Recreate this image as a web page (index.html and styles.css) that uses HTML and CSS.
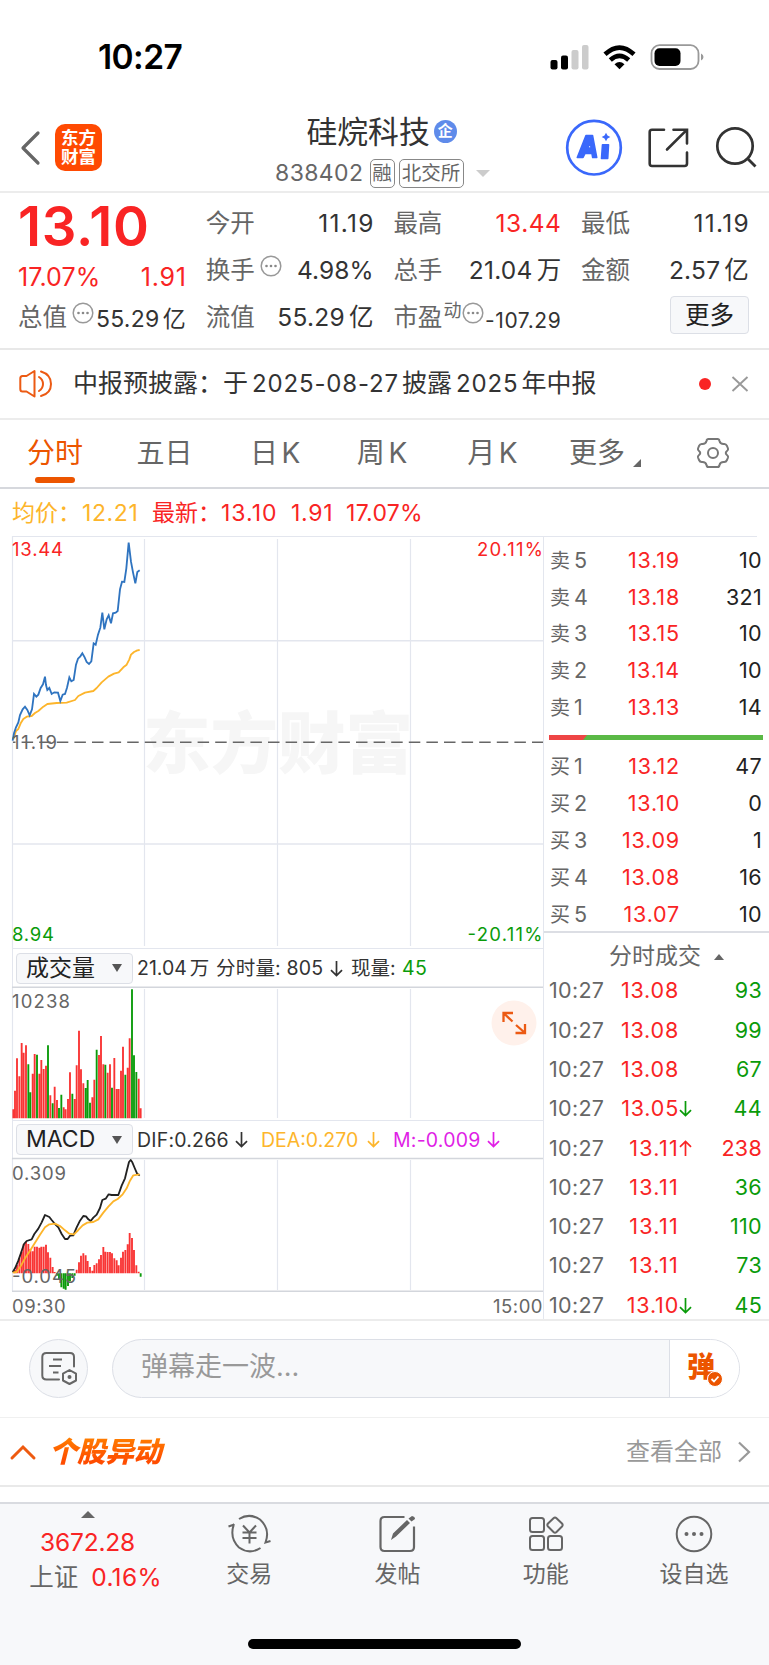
FILE: index.html
```html
<!DOCTYPE html>
<html lang="zh-CN">
<head>
<meta charset="utf-8">
<title>硅烷科技 838402</title>
<link rel="stylesheet" href="styles.css">
</head>
<body>
<div class="status">
  <div class="clock">10:27</div>
  <svg class="status-icons" width="156" height="30" viewBox="550 42 156 30">
    <rect x="551.5" y="60" width="7" height="9.5" rx="2"/>
    <rect x="562" y="55.5" width="7" height="14" rx="2"/>
    <rect x="572.5" y="50" width="7" height="19.500" rx="2" fill="#ccc"/>
    <rect x="583" y="45" width="6.500" height="24.500" rx="2" fill="#ccc"/>
    <g fill="none" stroke="#000" stroke-width="4.600">
      <path d="M606 54.300Q620.500 40.800 635 54.300"/>
      <path d="M611.300 60Q620.500 51.700 629.700 60"/>
    </g>
    <path d="M615.500 64.200Q620.500 60 625.500 64.200L620.500 69.300Z"/>
    <rect x="652.500" y="45.200" width="47" height="23.800" rx="8" fill="none" stroke="#999" stroke-width="1.800"/>
    <rect x="655.500" y="48.200" width="26" height="17.800" rx="5"/>
    <path d="M702 53.500Q704.500 54.500 704.500 57T702 60.500Z" fill="#999"/>
  </svg>
</div>

<header class="header">
  <svg class="back" width="20" height="34" viewBox="0 0 20 34"><path d="M18 2L3 17L18 32" fill="none" stroke="#666" stroke-width="3.200" stroke-linecap="round" stroke-linejoin="round"/></svg>
  <div class="brand"><span>东方</span><span>财富</span></div>
  <div class="name-block">
    <div class="name">硅烷科技<span class="corp">企</span></div>
    <div class="code-row"><span class="code">838402</span><span class="tag">融</span><span class="tag tag-wide">北交所</span><i class="tri-down"></i></div>
  </div>
  <svg class="tools" width="196" height="58" viewBox="565 119 196 58" fill="none">
    <circle cx="594" cy="147.700" r="26.800" stroke="#3a68fb" stroke-width="2.700"/>
    <path d="M577.300 157.500L586 135.500H592.500L596.700 157.500H592.700L592 153.500H585L583 157.500ZM587.700 148H591.200L590.300 143Z" fill="#3a68fb" fill-rule="evenodd" stroke="#3a68fb" stroke-width="1.600" stroke-linejoin="round"/>
    <path d="M602.500 144.800H608.500L607.700 158.500H601.500Z" fill="#3a68fb" stroke="#3a68fb" stroke-width="1.600" stroke-linejoin="round"/>
    <path d="M606 132.700L607.500 135.500L610.300 137L607.500 138.500L606 141.300L604.500 138.500L601.700 137L604.500 135.500Z" fill="#3a68fb"/>
    <path d="M664 129.700H652Q649.700 129.700 649.700 132V163.500Q649.700 166 652 166H684.500Q687 166 687 163.500V152.500M673.500 129.700H687V143.500M686.500 130.200L667 149.500" stroke="#333" stroke-width="2.600" stroke-linecap="round"/>
    <circle cx="735" cy="146" r="17.700" stroke="#333" stroke-width="2.700"/>
    <path d="M747.500 158.500L755.500 166.500" stroke="#333" stroke-width="2.900"/>
  </svg>
</header>

<section class="quote">
  <div class="q-col">
    <div class="big">13.10</div>
    <div class="q-row q-red q-change"><span>17.07%</span><span>1.91</span></div>
    <div class="q-row q-last"><span class="lb">总值</span><svg class="dots" viewBox="0 0 22 22"><use href="#more-dots"/></svg><span class="val val-s">55.29<b>亿</b></span></div>
  </div>
  <div class="q-col">
    <div class="q-row"><span class="lb">今开</span><span class="val w1">11.19</span></div>
    <div class="q-row"><span class="lb">换手</span><svg class="dots" viewBox="0 0 22 22"><use href="#more-dots"/></svg><span class="val">4.98%</span></div>
    <div class="q-row"><span class="lb">流值</span><span class="val w3">55.29<b>亿</b></span></div>
  </div>
  <div class="q-col">
    <div class="q-row"><span class="lb">最高</span><span class="val q-red w2">13.44</span></div>
    <div class="q-row"><span class="lb">总手</span><span class="val w3">21.04<b>万</b></span></div>
    <div class="q-row"><span class="lb">市盈</span><span class="sup">动</span><svg class="dots dots-tight" viewBox="0 0 22 22"><use href="#more-dots"/></svg><span class="val val-xs">-107.29</span></div>
  </div>
  <div class="q-col">
    <div class="q-row"><span class="lb">最低</span><span class="val w1">11.19</span></div>
    <div class="q-row"><span class="lb">金额</span><span class="val w3">2.57<b>亿</b></span></div>
    <div class="q-row"><button class="more-btn">更多</button></div>
  </div>
</section>

<section class="notice">
  <svg width="34" height="30" viewBox="19 369 34 30" fill="none" stroke="#ec5a13" stroke-width="2" stroke-linejoin="round">
    <path d="M34.500 371V396.500L26.500 391.500H22.500Q20.300 391.500 20.300 389V378.500Q20.300 376 22.500 376H26.500Z"/>
    <path d="M39 377Q43 379.500 43 384T39 391M41 371.500Q51 374.500 51 384T41 396" stroke-linecap="round"/>
  </svg>
  <p class="notice-text">中报预披露：<span>于</span><span class="num">2025-08-27</span>披露<span class="num">2025</span>年中报</p>
  <i class="dot"></i>
  <svg width="18" height="18" viewBox="0 0 18 18"><path d="M1.500 2L16.500 16M16.500 2L1.500 16" stroke="#999" stroke-width="1.900"/></svg>
</section>

<nav class="tabs">
  <span class="tab active">分时</span>
  <span class="tab">五日</span>
  <span class="tab">日<em>K</em></span>
  <span class="tab">周<em>K</em></span>
  <span class="tab">月<em>K</em></span>
  <span class="tab">更多<i class="corner"></i></span>
  <svg class="gear" width="34" height="32" viewBox="-17 -16 34 32" fill="none" stroke="#777" stroke-width="2" stroke-linejoin="round">
    <path d="M-4.500-14H4.500Q6.200-14 6.500-12Q7.300-8.800 11-9Q13-9.200 14-7L15-4.500Q15.500-3 14-2Q11.500 0 14 2Q15.500 3 15 4.500L14 7Q13 9.200 11 9Q7.300 8.800 6.500 12Q6.200 14 4.500 14H-4.500Q-6.200 14-6.500 12Q-7.300 8.800-11 9Q-13 9.200-14 7L-15 4.500Q-15.500 3-14 2Q-11.500 0-14-2Q-15.500-3-15-4.500L-14-7Q-13-9.200-11-9Q-7.300-8.800-6.500-12Q-6.200-14-4.500-14Z"/>
    <circle r="5"/>
  </svg>
</nav>

<div class="legend">
  <span class="l-avg">均价：</span><span class="l-avg l-n1">12.21</span><span class="l-new">最新：</span><span class="l-n2">13.10</span><span class="l-n3">1.91</span><span class="l-n4">17.07%</span>
</div>

<main class="detail">
  <div class="charts">
    <svg class="chart" width="543" height="412" viewBox="0 536 543 412">
      <g class="grid">
        <path d="M12.500 536V948M144.500 539V946M277.500 539V946M410.500 539V946"/>
        <path d="M12 640.700H543M12 844H543" stroke-width="1.600"/>
        <path d="M12 536.500H543"/>
      </g>
      <text class="wm" x="143" y="768" textLength="270">东方财富</text>
      <g transform="translate(0 530) scale(.33333)">
        <path class="avg" d="M40 628L48 603L55 597L62 580L70 567L80 560L95 558L105 549L115 543L130 530L142 522L170 519L200 518L225 510L235 498L255 488L280 483L290 474L305 457L325 440L342 431L356 427L370 412L380 404L388 388L393 374L402 366L412 361L419 360"/>
        <path class="price" d="M38 632L42 610L48 592L55 577L60 555L68 538L75 530L82 540L89 556L96 538L102 492L109 500L115 494L122 474L129 463L135 440L138 465L142 480L148 474L155 492L163 487L174 488L181 513L188 494L195 492L201 473L208 442L214 454L221 450L228 404L234 386L241 379L247 370L254 382L260 396L267 402L274 394L281 340L287 344L294 314L301 293L307 248L313 298L320 268L326 256L333 280L339 250L347 248L353 243L360 178L366 155L373 156L379 115L386 38L393 95L399 127L406 160L412 126L419 121"/>
      </g>
      <path d="M13 742.300H543" stroke="#666" stroke-width="1.400" stroke-dasharray="11.500 6.100" stroke-dashoffset="9"/>
      <text class="t red" x="12" y="555.500" textLength="51">13.44</text>
      <text class="t red" x="477" y="555.500" textLength="66">20.11%</text>
      <text class="t gray" x="12" y="748.500" textLength="45">11.19</text>
      <text class="t green" x="12" y="941" textLength="42">8.94</text>
      <text class="t green" x="467.500" y="941" textLength="75">-20.11%</text>
    </svg>
    <div class="ind">
      <span class="sel">成交量<i></i></span>
      <span class="ind-v iv1">21.04<b>万</b></span><span class="ind-v iv2">分时量: 805</span><svg class="ar" viewBox="0 0 12 16"><use href="#arrow-down"/></svg><span class="ind-v iv3">现量:</span><span class="ind-v iv4 green-c">45</span>
    </div>
    <div class="vol-wrap">
      <svg class="chart" width="543" height="133" viewBox="0 987 543 133">
        <g class="grid"><path d="M12.500 987V1120M144.500 989V1118M277.500 989V1118M410.500 989V1118"/><path d="M12 987.300H543" stroke="#d3d6dc" stroke-width="1.600"/></g>
        <text class="t gray" x="12" y="1008" textLength="58">10238</text>
        <g transform="translate(0 940) scale(.33333)" fill="none" stroke-width="5.600">
          <path stroke="#f93434" d="M40 535V508M45 535V452M51 535V355M58 535V409M65 535V309M71 535V338M78 535V316M98 535V401M104 535V342M118 535V401M124 535V360M131 535V387M138 535V377M151 535V466M164 535V440M171 535V480M191 535V502M197 535V508M204 535V477M210 535V397M224 535V477M230 535V376M237 535V272M243 535V388M250 535V430M277 535V472M283 535V419M297 535V345M303 535V288M310 535V373M323 535V398M330 535V373M343 535V354M350 535V447M356 535V447M363 535V392M369 535V320M383 535V383M389 535V295M416 535V416M422 535V505"/>
          <path stroke="#0a9b0a" d="M85 535V373M91 535V457M111 535V344M144 535V316M158 535V490M177 535V504M184 535V464M217 535V461M257 535V444M263 535V420M270 535V488M290 535V329M316 535V374M336 535V443M376 535V404M396 535V148M402 535V346M409 535V396"/>
        </g>
      </svg>
      <svg class="expand" width="46" height="46" viewBox="-23 -23 46 46" fill="none" stroke="#ec5a13" stroke-width="2.300">
        <circle r="22.500" fill="#fff1eb" stroke="none"/>
        <path d="M-1-10H-10.500V-1M-10-9.500L-1.500-1.500M11 1V10H1.500M10.500 9.500L2 2"/>
      </svg>
    </div>
    <div class="ind ind-2">
      <span class="sel sel-en">MACD<i></i></span>
      <span class="ind-v iv1 m1">DIF:0.266</span><svg class="ar" viewBox="0 0 12 16"><use href="#arrow-down"/></svg><span class="ind-v m2">DEA:0.270</span><svg class="ar c-y" viewBox="0 0 12 16"><use href="#arrow-down"/></svg><span class="ind-v m3">M:-0.009</span><svg class="ar c-m" viewBox="0 0 12 16"><use href="#arrow-down"/></svg>
    </div>
    <svg class="chart" width="543" height="134" viewBox="0 1158 543 134">
      <g class="grid"><path d="M12.500 1158V1291M144.500 1160V1290M277.500 1160V1290M410.500 1160V1290"/><path d="M12 1158.500H543M12 1291.300H543" stroke="#d3d6dc" stroke-width="1.400"/></g>
      <g transform="translate(0 940) scale(.33333)" fill="none">
        <path stroke="#f93434" stroke-width="5.600" d="M45 1000V990M51 1000V975M58 1000V955M65 1000V935M71 1000V912M78 1000V905M85 1000V912M91 1000V928M98 1000V934M104 1000V920M111 1000V920M118 1000V923M124 1000V920M131 1000V920M138 1000V914M144 1000V937M151 1000V953M158 1000V981M164 1000V996M230 1000V989M237 1000V967M243 1000V947M250 1000V940M257 1000V946M263 1000V963M270 1000V981M277 1000V992M283 1000V975M290 1000V970M297 1000V958M303 1000V945M310 1000V921M316 1000V935M323 1000V936M330 1000V936M336 1000V940M343 1000V955M350 1000V961M356 1000V976M363 1000V953M369 1000V935M376 1000V930M383 1000V913M389 1000V879M396 1000V894M402 1000V930M409 1000V976M416 1000V995"/>
        <path stroke="#0a9b0a" stroke-width="5.600" d="M171 1000V1007M177 1000V1018M184 1000V1042M191 1000V1046M197 1000V1049M204 1000V1038M210 1000V1024M217 1000V1014M224 1000V1007M422 1000V1010"/>
        <path class="dif" d="M38 997L45 985L55 962L65 933L72 912L80 903L95 898L103 882L115 866L125 847L135 825L148 831L155 840L165 852L175 862L185 882L195 897L203 897L210 887L220 886L230 862L240 842L250 828L258 829L265 838L272 843L280 833L290 824L300 804L307 780L317 776L326 763L335 765L355 765L365 737L375 715L381 690L387 666L392 660L397 667L404 684L411 700L419 707"/>
        <path class="avg" d="M38 998L50 996L60 982L75 955L90 932L105 908L120 884L135 862L148 853L165 851L180 858L195 871L208 881L222 883L235 870L248 856L262 848L280 846L295 838L310 818L325 800L340 784L353 777L368 763L380 745L390 722L400 706L419 703"/>
      </g>
      <text class="t gray" x="12" y="1179.500" textLength="54">0.309</text>
      <text class="t gray" x="12" y="1283" textLength="64">-0.045</text>
    </svg>
    <div class="times"><span>09:30</span><span>15:00</span></div>
  </div>

  <div class="book">
    <div class="levels">
      <div class="lv"><span>卖<em>5</em></span><span>13.19</span><span>10</span></div>
      <div class="lv"><span>卖<em>4</em></span><span>13.18</span><span>321</span></div>
      <div class="lv"><span>卖<em>3</em></span><span>13.15</span><span>10</span></div>
      <div class="lv"><span>卖<em>2</em></span><span>13.14</span><span>10</span></div>
      <div class="lv"><span>卖<em>1</em></span><span>13.13</span><span>14</span></div>
    </div>
    <svg class="ratio" width="214" height="5" viewBox="0 0 214 5"><path fill="#5ab946" d="M0 0H214V5H0Z"/><path fill="#ee4545" d="M0 0H38L34 5H0Z"/></svg>
    <div class="levels buys">
      <div class="lv"><span>买<em>1</em></span><span>13.12</span><span>47</span></div>
      <div class="lv"><span>买<em>2</em></span><span>13.10</span><span>0</span></div>
      <div class="lv"><span>买<em>3</em></span><span>13.09</span><span>1</span></div>
      <div class="lv"><span>买<em>4</em></span><span>13.08</span><span>16</span></div>
      <div class="lv"><span>买<em>5</em></span><span>13.07</span><span>10</span></div>
    </div>
    <div class="deals-head">分时成交<i class="tri-up"></i></div>
    <div class="deals">
      <div class="dl"><span>10:27</span><span>13.08</span><i></i><span>93</span></div>
      <div class="dl"><span>10:27</span><span>13.08</span><i></i><span>99</span></div>
      <div class="dl"><span>10:27</span><span>13.08</span><i></i><span>67</span></div>
      <div class="dl"><span>10:27</span><span>13.05</span><svg class="ar c-g" viewBox="0 0 12 16"><use href="#arrow-down"/></svg><span>44</span></div>
      <div class="dl up"><span>10:27</span><span class="wide">13.11</span><svg class="ar flip" viewBox="0 0 12 16"><use href="#arrow-down"/></svg><span>238</span></div>
      <div class="dl"><span>10:27</span><span class="wide">13.11</span><i></i><span>36</span></div>
      <div class="dl"><span>10:27</span><span class="wide">13.11</span><i></i><span>110</span></div>
      <div class="dl"><span>10:27</span><span class="wide">13.11</span><i></i><span>73</span></div>
      <div class="dl"><span>10:27</span><span>13.10</span><svg class="ar c-g" viewBox="0 0 12 16"><use href="#arrow-down"/></svg><span>45</span></div>
    </div>
  </div>
</main>

<section class="comment">
  <span class="round-btn">
    <svg width="36" height="34" viewBox="42 1353 36 34" fill="none" stroke="#666" stroke-width="2">
      <path d="M60 1381.500H47.500Q43.300 1381.500 43.300 1377.500V1359Q43.300 1355 47.500 1355H71Q75 1355 75 1359V1368.500" stroke-linecap="round"/>
      <path d="M54 1361.500H63M50 1368H62M54 1374.500H59.500" stroke-width="2.200"/>
      <path d="M70.500 1372L77 1375.700V1382.500L70.500 1386L64 1382.500V1375.700Z" stroke-linejoin="round"/>
      <circle cx="70.500" cy="1379" r="2" fill="#666" stroke="none"/>
    </svg>
  </span>
  <div class="input"><span class="ph">弹幕走一波...</span><span class="dan">弹<svg width="16" height="16" viewBox="0 0 16 16"><circle cx="8" cy="8" r="7.500" fill="#ec5500" stroke="#fff"/><path d="M4.500 8L7 10.500L11.500 5.500" fill="none" stroke="#fff" stroke-width="1.800"/></svg></span></div>
</section>

<section class="moves">
  <svg width="26" height="16" viewBox="0 0 26 16"><path d="M2 14L13 3L24 14" fill="none" stroke="#ee5a10" stroke-width="3" stroke-linecap="round"/></svg>
  <h2>个股异动</h2>
  <span class="all">查看全部</span>
  <svg width="14" height="22" viewBox="0 0 14 22"><path d="M2 1.500L12 11L2 20.500" fill="none" stroke="#999" stroke-width="2.200"/></svg>
</section>

<footer class="bottom">
  <div class="bar">
    <div class="index">
      <i class="tri-up"></i>
      <div class="ix-v">3672.28</div>
      <div class="ix-n"><span>上证</span><span class="ix-p">0.16%</span></div>
    </div>
    <div class="item">
      <svg width="44" height="40" viewBox="227.500 1514 44 40" fill="none" stroke="#666" stroke-width="2">
        <path d="M239.500 1519Q250 1512.500 260.500 1519.500Q271 1529 266 1542.500L271 1541M234.500 1524Q229.500 1538 239.500 1547.500Q250 1555 261 1548M229 1526.500L234.800 1524.500"/>
        <path d="M243.500 1525.500L250 1532.500L256.500 1525.500M243 1532.500H257M243 1538H257M250 1532.500V1543.500"/>
      </svg><span>交易</span></div>
    <div class="item">
      <svg width="44" height="40" viewBox="376.500 1514 44 40" fill="none" stroke="#666" stroke-width="2.200">
        <path d="M406 1517H386Q382 1517 382 1521V1547Q382 1551 386 1551H411.500Q415.500 1551 415.500 1547V1526.500"/>
        <path fill="#666" stroke="none" d="M392.500 1540L394.500 1533.500L408.500 1520L411.500 1523L397.500 1536.500ZM410 1518.500L413.500 1516Q416.500 1516.500 416.500 1519L413 1521.500Z"/>
      </svg><span>发帖</span></div>
    <div class="item">
      <svg width="44" height="40" viewBox="525 1514 44 40" fill="none" stroke="#666" stroke-width="2" stroke-linejoin="round">
        <rect x="531" y="1518" width="14" height="14" rx="2.500"/><rect x="531" y="1536" width="14" height="14" rx="2.500"/><rect x="549" y="1536" width="14" height="14" rx="2.500"/>
        <path d="M554.500 1518.200Q556 1516.800 557.500 1518.200L563 1523.500Q564.300 1525 563 1526.500L557.500 1532Q556 1533.400 554.500 1532L549 1526.500Q547.700 1525 549 1523.500Z"/>
      </svg><span>功能</span></div>
    <div class="item">
      <svg width="44" height="40" viewBox="672.500 1514 44 40"><circle cx="694.500" cy="1534" r="17.300" fill="none" stroke="#666" stroke-width="2"/><g fill="#666"><circle cx="687" cy="1534" r="2"/><circle cx="694.500" cy="1534" r="2"/><circle cx="702" cy="1534" r="2"/></g></svg>
      <span>设自选</span></div>
  </div>
  <div class="home"></div>
</footer>

<svg class="defs" width="0" height="0">
  <defs>
    <g id="more-dots"><circle cx="11" cy="11" r="9.800" fill="none" stroke="#999" stroke-width="1.500"/><g fill="#888"><circle cx="6.500" cy="11" r="1.300"/><circle cx="11" cy="11" r="1.300"/><circle cx="15.500" cy="11" r="1.300"/></g></g>
    <path id="arrow-down" d="M6 1V14.500M.800 9.500L6 14.700L11.200 9.500" fill="none" stroke="currentColor" stroke-width="1.600"/>
  </defs>
</svg>
</body>
</html>
```
FILE: styles.css
```css
* { box-sizing: border-box; }
body {
  margin: 0;
  width: 769px;
  height: 1665px;
  overflow: hidden;
  background: #fff;
  color: #333;
  font-family: Inter, "Noto Sans CJK SC", sans-serif;
  font-size: 24px;
  line-height: 1;
  display: flex;
  flex-direction: column;
}
svg { display: block; flex: none; overflow: visible; }
em, i { font-style: normal; }
b { font-weight: 400; margin-left: 4px; }
span { white-space: nowrap; }
.defs { position: absolute; }

/* status bar */
.status { height: 112px; padding: 42px 64px 0 98px; display: flex; justify-content: space-between; flex: none; }
.clock { font-size: 33.5px; font-weight: 600; line-height: 31px; color: #000; letter-spacing: -0.600px; }

/* header */
.header { height: 81px; flex: none; border-bottom: 2px solid #ececec; padding-left: 20px; display: flex; }
.back { margin-top: 19px; }
.brand {
  margin: 12px 0 0 15px; width: 47px; height: 47px; border-radius: 10px; background: #ff4a02;
  color: #fff; font-weight: 700; font-size: 17.5px; line-height: 19px; padding-top: 4px;
  display: flex; flex-direction: column; align-items: center; flex: none;
}
.name-block { margin-left: 173px; width: 290px; }
.name { height: 39px; padding: 0 0 0 31.500px; display: flex; align-items: center; font-size: 30.800px; line-height: 39px; }
.corp { margin-left: 4px; width: 23px; height: 23px; border-radius: 50%; background: #5f8bea; color: #fff; font-size: 15px; font-weight: 700; line-height: 22px; text-align: center; }
.code-row { display: flex; align-items: center; height: 30px; margin-top: 7px; color: #666; }
.code { font-size: 23px; letter-spacing: 0.400px; width: 94.500px; }
.tag { border: 1.500px solid #888; border-radius: 5px; height: 29px; width: 25px; font-size: 19.500px; line-height: 26px; display: flex; justify-content: center; }
.tag-wide { width: 65px; margin-left: 4px; }
.tri-down { margin-left: 12px; border: 7px solid transparent; border-top: 7px solid #ccc; border-bottom: 0; }
.tools { margin-top: 7px; }

/* quote grid */
.quote { height: 157px; flex: none; border-bottom: 2px solid #e8e8e8; padding: 7px 19px 0 18px; display: grid; grid-template-columns: repeat(4, 168px); column-gap: 19.700px; }
.q-row { height: 47px; display: flex; align-items: center; }
.lb { color: #666; font-size: 24.500px; }
.val { margin-left: auto; font-size: 24.500px; letter-spacing: 0.100px; }
.w1 { letter-spacing: 1.300px; margin-right: -1px; }
.w2 { letter-spacing: 0.500px; }
.w3 { letter-spacing: 0.250px; }
.val-s { font-size: 23px; margin-top: 3px; letter-spacing: 0.300px; }
.val-s b { margin-left: 3px; }
.val-xs { font-size: 21px; margin-top: 5px; letter-spacing: 0.600px; }
.q-red { color: #f92424; }
.big { color: #f92424; font-size: 54.500px; font-weight: 600; height: 55px; line-height: 53px; letter-spacing: 0.700px; }
.q-change { height: 39px; padding-top: 5px; justify-content: space-between; font-size: 25px; letter-spacing: 0.100px; }
.q-change span:last-child { letter-spacing: 0.800px; margin-right: -0.800px; }
.dots { width: 22px; height: 22px; margin: -10px 0 0 5px; }
.dots-tight { margin-left: 1px; }
.sup { font-size: 18px; color: #666; margin: -14px 0 0 1px; }
.more-btn { margin-left: auto; width: 79px; height: 38px; margin-top: -5px; border: 1.500px solid #dcdfe6; border-radius: 4px; background: #f7f8fa; font: inherit; font-size: 24.500px; line-height: 34px; padding: 0; color: #222; }

/* notice */
.notice { height: 70px; flex: none; border-bottom: 2px solid #ececec; padding: 0 20px 1px 19px; display: flex; align-items: center; }
.notice-text { margin: 0 0 0 20px; font-size: 25px; width: 607px; flex: none; white-space: nowrap; }
.num { margin: 0 3px 0 4px; font-size: 24px; letter-spacing: 0.850px; }
.dot { width: 12px; height: 12px; border-radius: 50%; background: #f92424; margin: 0 auto 0 19px; flex: none; }

/* tabs */
.tabs { height: 69px; flex: none; border-bottom: 2px solid #d6d8dd; padding: 0 39px 0 27px; display: flex; color: #666; font-size: 28px; line-height: 66px; align-items: flex-start; }
.tab { position: relative; flex: none; }
.tab em { margin-left: 3.500px; }
.tab:nth-child(2) { margin-left: 53.500px; }
.tab:nth-child(3) { margin-left: 57.500px; }
.tab:nth-child(4) { margin-left: 56.500px; }
.tab:nth-child(5) { margin-left: 60px; }
.tab:nth-child(6) { margin-left: 51.500px; }
.active { color: #ec5500; }
.active::after { content: ""; position: absolute; left: 8px; top: 57px; width: 40px; height: 6px; border-radius: 3px; background: #ec5500; }
.corner { display: inline-block; margin-left: 8px; border-left: 8px solid transparent; border-bottom: 8px solid #666; position: relative; top: 4px; }
.gear { margin: 17px 0 0 auto; }

/* price legend */
.legend { height: 47px; flex: none; padding-left: 12px; line-height: 49px; font-size: 23px; display: flex; color: #f92424; letter-spacing: 0.300px; }
.legend span { flex: none; }
.l-avg { color: #fdb52b; width: 70px; letter-spacing: 0; }
.legend .l-n1 { width: 70px; letter-spacing: 0.600px; }
.l-new { width: 69px; letter-spacing: 0; }
.l-n2 { width: 70px; letter-spacing: 1px; }
.l-n3 { width: 55px; letter-spacing: 0.700px; }

/* charts and order book */
.detail { height: 785px; flex: none; display: flex; border-bottom: 2px solid #ececec; }
.charts { width: 543px; flex: none; display: flex; flex-direction: column; }
.grid { fill: none; stroke: #e3e6ee; stroke-width: 1.200; }
.wm { font-size: 67.500px; font-weight: 900; fill: #f6f6f6; }
.avg { fill: none; stroke: #fdb52b; stroke-width: 5.500; stroke-linejoin: round; }
.price { fill: none; stroke: #2f74c0; stroke-width: 5.500; stroke-linejoin: miter; }
.dif { fill: none; stroke: #222; stroke-width: 5.500; stroke-linejoin: round; }
.t { font-size: 18.500px; }
.red { fill: #f92424; }
.gray { fill: #666; }
.green { fill: #0a9b0a; }
.green-c { color: #0a9b0a; }
.ind { height: 39px; flex: none; border-top: 1.500px solid #e3e6ee; border-left: 1px solid #e3e6ee; margin-left: 12px; padding-left: 3px; display: flex; align-items: center; font-size: 19.500px; }
.ind-2 { height: 38px; }
.sel { width: 117px; height: 31px; border: 1.500px solid #dcdfe6; border-radius: 4px; background: #f7f8fa; padding: 0 10px 0 9px; font-size: 23px; display: flex; align-items: center; justify-content: space-between; color: #222; flex: none; }
.sel i { border: 5px solid transparent; border-top: 8px solid #555; border-bottom: 0; }
.ind b { margin-left: 3px; }
.ind-v { margin-top: 2px; }
.iv1 { margin-left: 4px; width: 79px; }
.iv2 { width: 114px; letter-spacing: 0.200px; }
.iv3 { margin-left: 8px; width: 51px; }
.iv4 { letter-spacing: 0.400px; }
.ar { width: 13px; height: 17px; }
.m1 { width: 98px; letter-spacing: 0.200px; }
.m2 { margin-left: 13px; width: 106px; color: #fdb52b; }
.m3 { margin-left: 13px; width: 94px; color: #e01fe6; letter-spacing: 0.200px; }
.c-y { color: #fdb52b; }
.c-m { color: #e01fe6; }
.c-g { color: #0a9b0a; }
.vol-wrap { position: relative; height: 133px; flex: none; }
.expand { position: absolute; left: 491px; top: 13px; }
.times { height: 29px; padding: 2px 0 0 12px; display: flex; justify-content: space-between; align-items: center; font-size: 18.500px; color: #666; letter-spacing: 0.500px; }

.book { width: 226px; flex: none; border-left: 1.500px solid #e3e6ee; background: linear-gradient(#e3e6ee, #e3e6ee) 0 0 / 213px 1px no-repeat; font-size: 21.500px; }
.levels { padding: 6px 7px 0 6px; }
.buys { padding-top: 8px; }
.lv { display: grid; grid-template-columns: 50px 80px 1fr; height: 36.900px; align-items: center; color: #222; }
.lv span:nth-child(1) { color: #666; font-size: 20px; }
.lv em { font-size: 21.500px; margin-left: 4px; }
.lv span:nth-child(2), .dl span:nth-child(2) { color: #f92424; text-align: right; letter-spacing: 0.800px; }
.lv span:nth-child(3) { text-align: right; letter-spacing: 0.300px; }
.ratio { margin: 9px 0 0 5px; }
.buys { height: 193px; border-bottom: 2px solid #dcdee4; }
.deals-head { height: 38px; padding: 9px 0 0 65px; font-size: 23px; color: #666; display: flex; align-items: center; }
.tri-up { border: 5px solid transparent; border-bottom: 6px solid #666; border-top: 0; margin-left: 13px; }
.deals { padding: 0 7px 0 5px; height: 350px; }
.dl { display: grid; grid-template-columns: 56px 74px 14px 1fr; height: 39.300px; align-items: center; color: #666; }
.dl span:first-child { letter-spacing: 0.300px; }
.dl span.wide:nth-child(2) { letter-spacing: 1.300px; }
.dl span:nth-child(4) { color: #0a9b0a; text-align: right; letter-spacing: 0.300px; }
.up .ar { color: #f92424; }
.dl.up span:nth-child(4) { color: #f92424; }
.flip { transform: scaleY(-1); }

/* comment box */
.comment { height: 97px; flex: none; border-bottom: 1.500px solid #f0f0f0; padding: 0 29px 2px; display: flex; align-items: center; gap: 24px; }
.round-btn { width: 59px; height: 59px; border: 1.500px solid #dcdfe6; border-radius: 50%; background: #f7f8fa; display: flex; align-items: center; justify-content: center; flex: none; }
.input { width: 628px; height: 59px; border: 1.500px solid #dcdfe6; border-radius: 30px; background: #f7f8fa; display: flex; overflow: hidden; }
.ph { width: 556px; flex: none; padding-left: 28px; font-size: 27px; line-height: 53px; color: #999; }
.dan { position: relative; flex: 1; background: #fff; border-left: 1.500px solid #dcdfe6; color: #ec5500; font-size: 28px; font-weight: 900; line-height: 54px; padding-left: 17px; }
.dan svg { position: absolute; left: 37px; top: 31px; }

/* stock moves */
.moves { height: 69px; flex: none; border-bottom: 2px solid #e9e9e9; padding: 1px 18px 0 10px; display: flex; align-items: center; }
.moves h2 { margin: 0 auto 0 13px; font-size: 28.500px; font-weight: 900; font-style: italic; line-height: 40px; background: linear-gradient(#ff8a00, #ff4d00 70%); -webkit-background-clip: text; background-clip: text; color: transparent; letter-spacing: -0.400px; padding-right: 5px; }
.all { color: #999; font-size: 24px; margin-right: 15px; }

/* bottom bar */
.bottom { margin-top: 15px; flex: 1; background: #f7f8fa; border-top: 2px solid #d9dbe0; }
.bar { display: flex; height: 96px; padding-top: 1px; color: #666; font-size: 23px; }
.index { width: 175px; display: flex; flex-direction: column; align-items: center; color: #f92424; }
.index .tri-up { margin: 6px 0 0; border-width: 0 7px 7px; }
.ix-v { font-size: 24.500px; margin-top: 11px; line-height: 26px; letter-spacing: -0.200px; }
.ix-n { display: flex; gap: 13px; margin-top: 7px; font-size: 24.500px; line-height: 30px; margin-left: 16px; }
.ix-n span:first-child { color: #666; }
.ix-p { letter-spacing: 0.300px; }
.item { width: 148.300px; display: flex; flex-direction: column; align-items: center; padding-top: 9px; }
.item span { margin-top: 5px; line-height: 30px; }
.home { width: 273px; height: 10px; border-radius: 5px; background: #000; margin: 39px 0 0 248px; }
```
